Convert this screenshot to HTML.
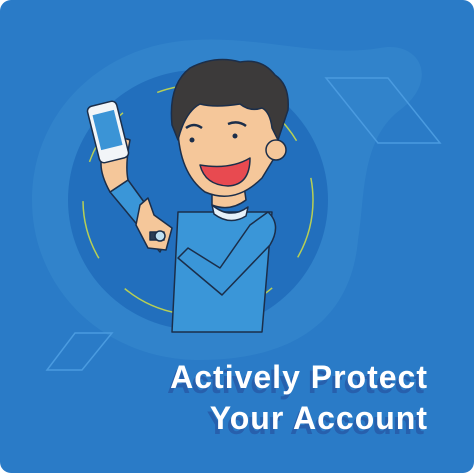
<!DOCTYPE html>
<html><head><style>
html,body{margin:0;padding:0;background:#fff;}
.c{position:relative;width:474px;height:473px;border-radius:11px;overflow:hidden;background:#2a7bc7;}
svg{position:absolute;left:0;top:0;}
.t{position:absolute;right:46px;font-family:"Liberation Sans",sans-serif;font-weight:bold;font-size:32px;color:#fff;letter-spacing:1px;white-space:nowrap;text-shadow:-3px 5px 0 #2760ad;}
</style></head><body>
<div class="c">
<svg width="474" height="473" viewBox="0 0 474 473">
 <path d="M195 40 C260 36 320 58 380 48 C420 40 440 80 400 110 C360 140 365 200 358 240 C350 330 280 360 200 360 C105 360 32 290 32 200 C32 110 105 43 195 40Z" fill="#3386cc" opacity="0.8"/>
 <circle cx="198" cy="200" r="130" fill="#226fbd"/>
 <circle cx="198" cy="200" r="115" fill="none" stroke="#b7cf55" stroke-width="1.5" stroke-dasharray="60 40"/>
 <path d="M326 78 L388 78 L440 143 L378 143Z" fill="none" stroke="#4a9be0" stroke-width="1.5"/>
 <path d="M75 333 L112 333 L82 370 L47 370Z" fill="none" stroke="#4a9be0" stroke-width="1.5"/>
 <g stroke="#1b2e4a" stroke-width="1.5" stroke-linejoin="round">
  <path d="M178 212 L272 212 L262 332 L172 332 Z" fill="#3a96d8"/>
  <path d="M212 205 Q230 220 248 207 L246 216 Q230 226 214 214Z" fill="#e6f1fa"/>
  <path d="M268 212 Q282 225 270 245 L222 295 L178 258 L188 248 L220 268 L250 225Z" fill="#3a96d8"/>
  <path d="M110 192 L128 180 L168 235 L160 252Z" fill="#3a96d8"/>
  <path d="M105 150 Q95 165 110 192 L128 180 Q125 165 130 140 Q118 135 105 150Z" fill="#f5c79a"/>
  <g transform="rotate(-14 108 132)"><rect x="93" y="103" width="30" height="58" rx="5" fill="#f2f5f8"/><rect x="97" y="112" width="22" height="36" fill="#3b94d6" stroke="none"/></g>
  <path d="M140 205 L148 198 L154 215 L172 228 L166 250 L148 248 L136 225Z" fill="#f5c79a"/>
  <rect x="150" y="232" width="14" height="8" fill="#2a3c55"/>
  <circle cx="160" cy="236" r="5" fill="#bfe0f3"/>
  <path d="M212 188 L212 205 Q230 212 246 200 L244 186Z" fill="#f5c79a"/>
  <path d="M178 112 Q175 170 205 192 Q235 205 262 178 L276 155 L280 120 Q270 100 240 98 Q200 100 178 112Z" fill="#f5c79a"/>
  <circle cx="276" cy="150" r="10" fill="#f5c79a"/>
  <path d="M172 125 Q168 85 190 68 Q215 55 240 62 Q262 58 275 75 Q290 85 288 110 L278 140 L272 128 Q270 112 262 108 Q250 112 240 104 Q215 108 200 104 Q185 112 178 140Z" fill="#3c3a3a"/>
  <path d="M200 165 Q230 170 250 158 Q250 185 228 186 Q205 185 200 165Z" fill="#e84a50"/>
 </g>
 <circle cx="192" cy="140" r="2.5" fill="#1b2e4a"/><circle cx="235" cy="136" r="2.5" fill="#1b2e4a"/>
 <path d="M186 128 Q194 122 202 128 M228 124 Q238 120 246 126" stroke="#1b2e4a" stroke-width="2.5" fill="none"/>
</svg>
<div class="t" style="top:359px">Actively Protect</div>
<div class="t" style="top:400px">Your Account</div>
</div>
</body></html>
